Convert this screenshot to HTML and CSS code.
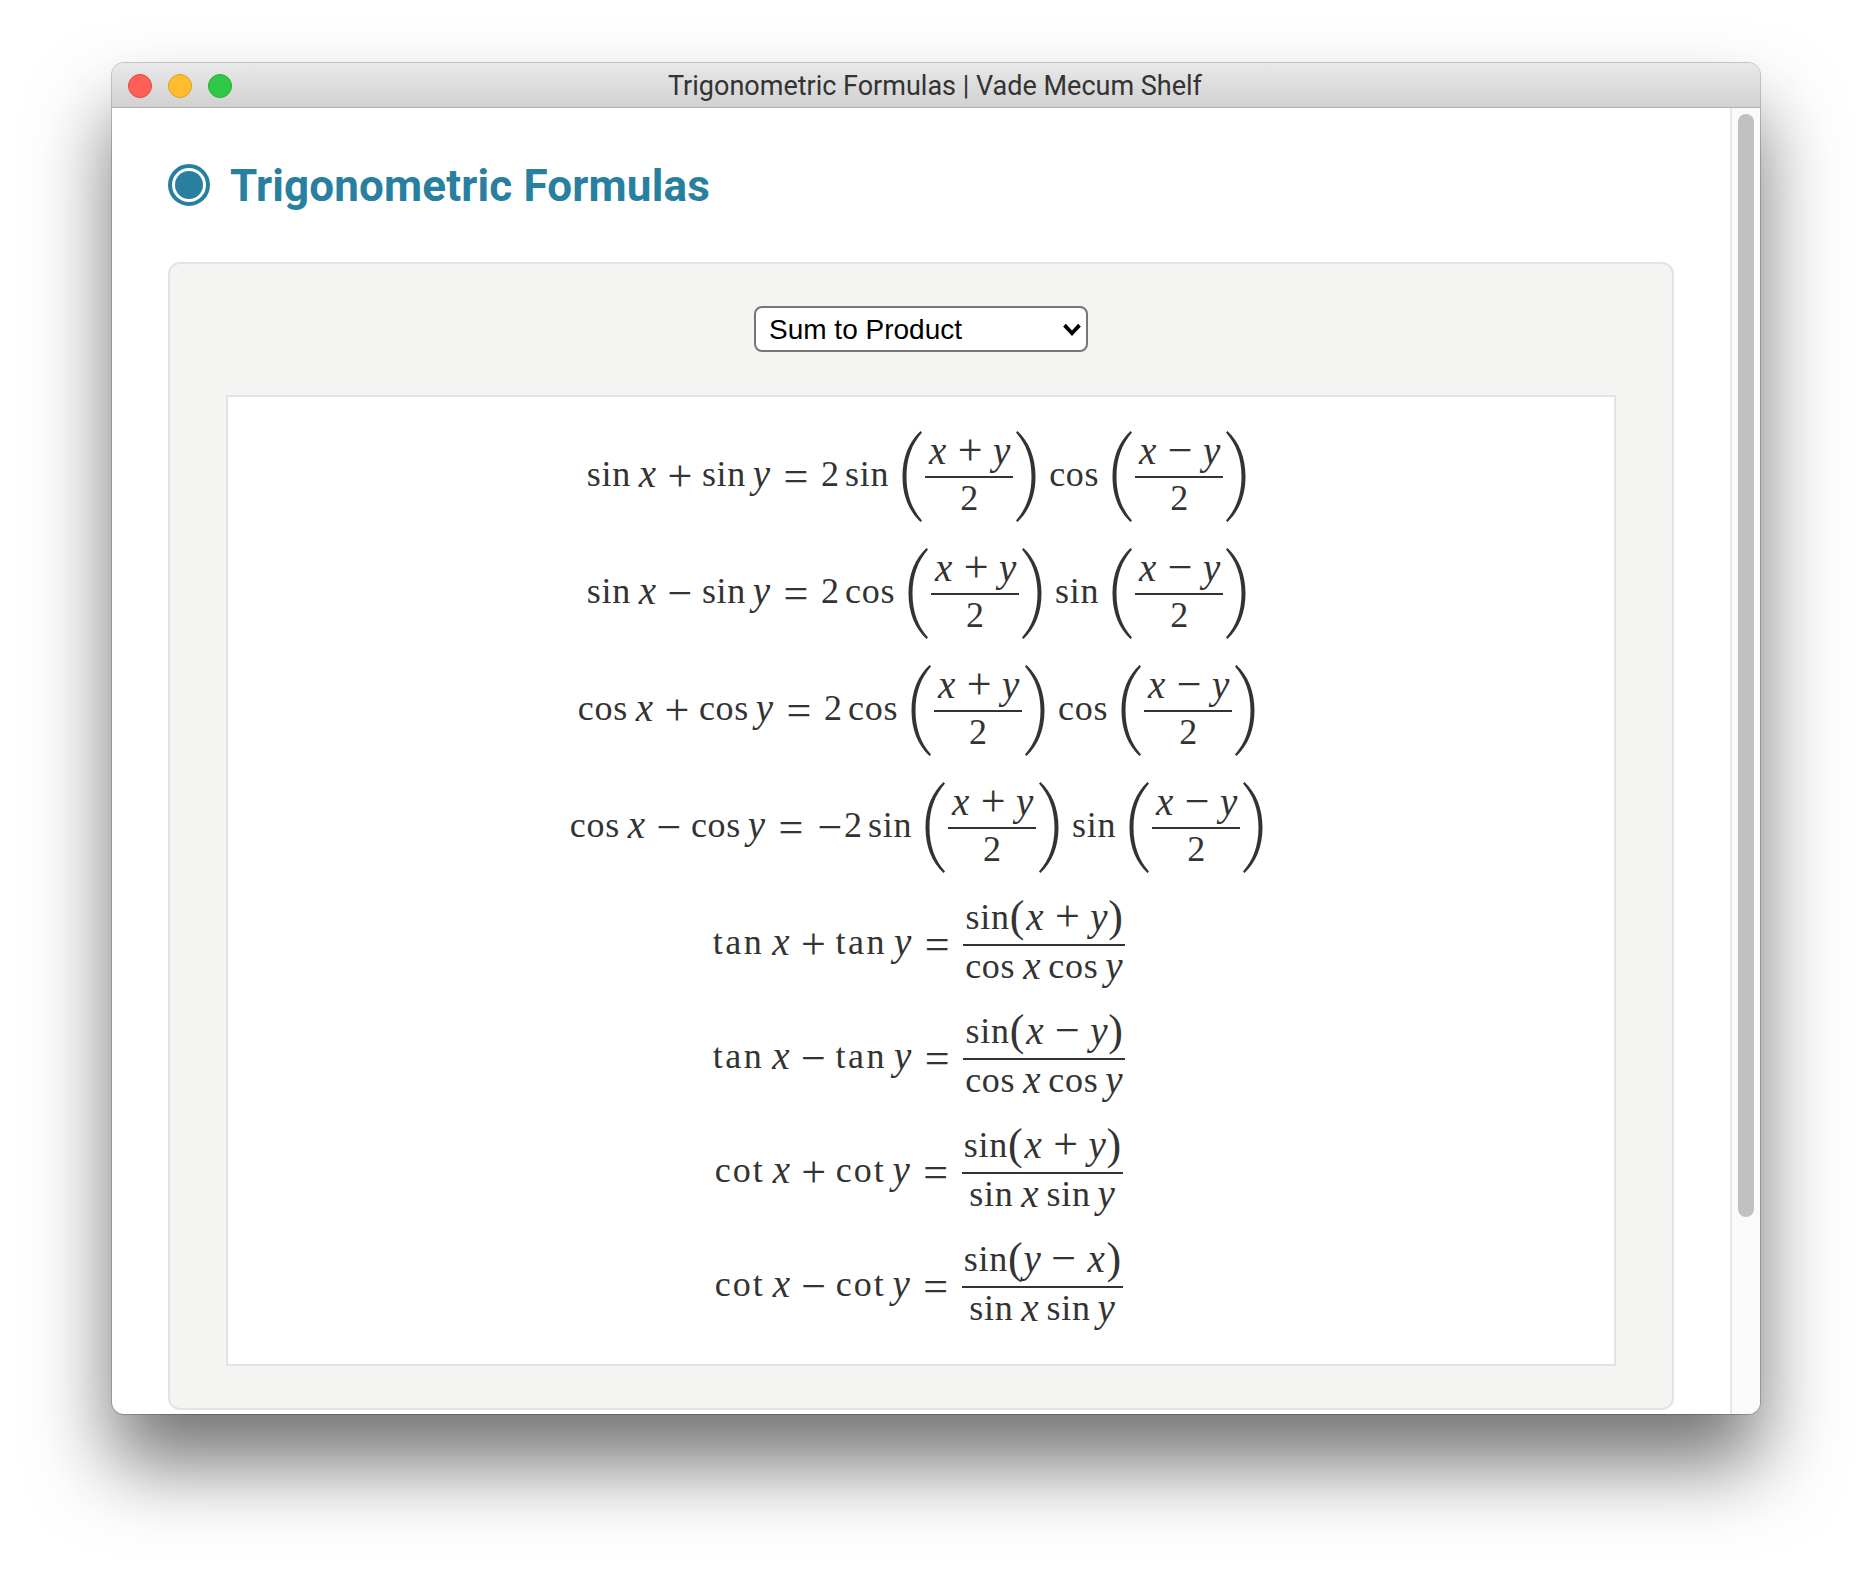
FILE: index.html
```html
<!DOCTYPE html>
<html lang="en">
<head>
    <meta charset="UTF-8">
    <meta name="viewport" content="width=device-width, initial-scale=1.0">
    <title>Trigonometric Formulas | Vade Mecum Shelf</title>
    <link rel="stylesheet" href="styles.css">
</head>
<body>
    <svg class="defs" width="0" height="0" aria-hidden="true">
        <symbol id="lp" viewBox="0 0 22 91"><path d="M19.5 0 C8 11 1.5 26 1.5 45.5 C1.5 65 8 80 19.5 91 L21 89.5 C11 78 5.5 64 5.5 45.5 C5.5 27 11 13 21 1.5 Z"/></symbol>
        <symbol id="rp" viewBox="0 0 22 91"><path d="M2.5 0 C14 11 20.5 26 20.5 45.5 C20.5 65 14 80 2.5 91 L1 89.5 C11 78 16.5 64 16.5 45.5 C16.5 27 11 13 1 1.5 Z"/></symbol>
    </svg>
    <div class="window">
        <header class="titlebar">
            <div class="lights">
                <span class="light red"></span>
                <span class="light yellow"></span>
                <span class="light green"></span>
            </div>
            <div class="wintitle">Trigonometric Formulas | Vade Mecum Shelf</div>
        </header>
        <div class="winbody">
            <main class="content">
                <h1 class="heading"><span class="bullet"><span class="dot"></span></span>Trigonometric Formulas</h1>
                <section class="panel">
                    <div class="selectwrap">
                        <select class="picker" name="group">
                            <option>Sum to Product</option>
                        </select>
                        <svg class="chevron" viewBox="0 0 16 12" width="20" height="15"><path d="M2 2.5 L8 9 L14 2.5" fill="none" stroke="#000" stroke-width="3"/></svg>
                    </div>
                    <div class="formulas">
                        <div class="row tall">
                            <span class="fn">sin</span><span class="thin"></span><span class="mi x">x</span><span class="op">+</span><span class="fn">sin</span><span class="thin"></span><span class="mi y">y</span><span class="rel">=</span><span class="num2">2</span><span class="thin"></span><span class="fn">sin</span>
                            <svg class="paren open"><use href="#lp"/></svg>
                            <span class="frac"><span class="top"><span class="mi x">x</span><span class="op">+</span><span class="mi y">y</span></span><span class="bot"><span class="num2">2</span></span></span>
                            <svg class="paren close"><use href="#rp"/></svg>
                            <span class="fn">cos</span>
                            <svg class="paren open"><use href="#lp"/></svg>
                            <span class="frac"><span class="top"><span class="mi x">x</span><span class="op">−</span><span class="mi y">y</span></span><span class="bot"><span class="num2">2</span></span></span>
                            <svg class="paren last"><use href="#rp"/></svg>
                        </div>
                        <div class="row tall">
                            <span class="fn">sin</span><span class="thin"></span><span class="mi x">x</span><span class="op">−</span><span class="fn">sin</span><span class="thin"></span><span class="mi y">y</span><span class="rel">=</span><span class="num2">2</span><span class="thin"></span><span class="fn">cos</span>
                            <svg class="paren open"><use href="#lp"/></svg>
                            <span class="frac"><span class="top"><span class="mi x">x</span><span class="op">+</span><span class="mi y">y</span></span><span class="bot"><span class="num2">2</span></span></span>
                            <svg class="paren close"><use href="#rp"/></svg>
                            <span class="fn">sin</span>
                            <svg class="paren open"><use href="#lp"/></svg>
                            <span class="frac"><span class="top"><span class="mi x">x</span><span class="op">−</span><span class="mi y">y</span></span><span class="bot"><span class="num2">2</span></span></span>
                            <svg class="paren last"><use href="#rp"/></svg>
                        </div>
                        <div class="row tall">
                            <span class="fn">cos</span><span class="thin"></span><span class="mi x">x</span><span class="op">+</span><span class="fn">cos</span><span class="thin"></span><span class="mi y">y</span><span class="rel">=</span><span class="num2">2</span><span class="thin"></span><span class="fn">cos</span>
                            <svg class="paren open"><use href="#lp"/></svg>
                            <span class="frac"><span class="top"><span class="mi x">x</span><span class="op">+</span><span class="mi y">y</span></span><span class="bot"><span class="num2">2</span></span></span>
                            <svg class="paren close"><use href="#rp"/></svg>
                            <span class="fn">cos</span>
                            <svg class="paren open"><use href="#lp"/></svg>
                            <span class="frac"><span class="top"><span class="mi x">x</span><span class="op">−</span><span class="mi y">y</span></span><span class="bot"><span class="num2">2</span></span></span>
                            <svg class="paren last"><use href="#rp"/></svg>
                        </div>
                        <div class="row tall">
                            <span class="fn">cos</span><span class="thin"></span><span class="mi x">x</span><span class="op">−</span><span class="fn">cos</span><span class="thin"></span><span class="mi y">y</span><span class="rel">=</span><span class="neg">−</span><span class="num2">2</span><span class="thin"></span><span class="fn">sin</span>
                            <svg class="paren open"><use href="#lp"/></svg>
                            <span class="frac"><span class="top"><span class="mi x">x</span><span class="op">+</span><span class="mi y">y</span></span><span class="bot"><span class="num2">2</span></span></span>
                            <svg class="paren close"><use href="#rp"/></svg>
                            <span class="fn">sin</span>
                            <svg class="paren open"><use href="#lp"/></svg>
                            <span class="frac"><span class="top"><span class="mi x">x</span><span class="op">−</span><span class="mi y">y</span></span><span class="bot"><span class="num2">2</span></span></span>
                            <svg class="paren last"><use href="#rp"/></svg>
                        </div>
                        <div class="row short first">
                            <span class="fn wide">tan</span><span class="thin"></span><span class="mi x">x</span><span class="op">+</span><span class="fn wide">tan</span><span class="thin"></span><span class="mi y">y</span><span class="rel">=</span>
                            <span class="frac big"><span class="top"><span class="fn">sin</span><span class="brk">(</span><span class="mi x">x</span><span class="op">+</span><span class="mi y">y</span><span class="brk">)</span></span><span class="bot"><span class="fn">cos</span><span class="thin"></span><span class="mi x">x</span><span class="thin"></span><span class="fn">cos</span><span class="thin"></span><span class="mi y">y</span></span></span>
                        </div>
                        <div class="row short">
                            <span class="fn wide">tan</span><span class="thin"></span><span class="mi x">x</span><span class="op">−</span><span class="fn wide">tan</span><span class="thin"></span><span class="mi y">y</span><span class="rel">=</span>
                            <span class="frac big"><span class="top"><span class="fn">sin</span><span class="brk">(</span><span class="mi x">x</span><span class="op">−</span><span class="mi y">y</span><span class="brk">)</span></span><span class="bot"><span class="fn">cos</span><span class="thin"></span><span class="mi x">x</span><span class="thin"></span><span class="fn">cos</span><span class="thin"></span><span class="mi y">y</span></span></span>
                        </div>
                        <div class="row short">
                            <span class="fn mid">cot</span><span class="thin"></span><span class="mi x">x</span><span class="op">+</span><span class="fn mid">cot</span><span class="thin"></span><span class="mi y">y</span><span class="rel">=</span>
                            <span class="frac big"><span class="top"><span class="fn">sin</span><span class="brk">(</span><span class="mi x">x</span><span class="op">+</span><span class="mi y">y</span><span class="brk">)</span></span><span class="bot"><span class="fn">sin</span><span class="thin"></span><span class="mi x">x</span><span class="thin"></span><span class="fn">sin</span><span class="thin"></span><span class="mi y">y</span></span></span>
                        </div>
                        <div class="row short">
                            <span class="fn mid">cot</span><span class="thin"></span><span class="mi x">x</span><span class="op">−</span><span class="fn mid">cot</span><span class="thin"></span><span class="mi y">y</span><span class="rel">=</span>
                            <span class="frac big"><span class="top"><span class="fn">sin</span><span class="brk">(</span><span class="mi y">y</span><span class="op">−</span><span class="mi x">x</span><span class="brk">)</span></span><span class="bot"><span class="fn">sin</span><span class="thin"></span><span class="mi x">x</span><span class="thin"></span><span class="fn">sin</span><span class="thin"></span><span class="mi y">y</span></span></span>
                        </div>
                    </div>
                </section>
            </main>
            <div class="scrollbar"><div class="thumb"></div></div>
        </div>
    </div>
</body>
</html>
```

FILE: styles.css
```css
html, body {
    height: 100%;
}
body {
    margin: 0;
    padding: 63px 112px 0;
    box-sizing: border-box;
    background-color: #fff;
    overflow: hidden;
}
.defs {
    position: absolute;
}
.window {
    height: 1351px;
    display: flex;
    flex-direction: column;
    background-color: #fff;
    border-radius: 12px;
    overflow: hidden;
    box-shadow: 0 50px 80px rgba(0,0,0,0.55), 0 0 0 1px rgba(0,0,0,0.2);
}
.titlebar {
    height: 45px;
    flex: none;
    box-sizing: border-box;
    display: flex;
    align-items: center;
    position: relative;
    background: linear-gradient(#e9e9e9, #d1d1d1);
    border-bottom: 1px solid #b1b1b1;
}
.lights {
    display: flex;
    gap: 16px;
    padding: 1px 0 0 16px;
}
.light {
    width: 24px;
    height: 24px;
    box-sizing: border-box;
    border-radius: 50%;
    border: 1px solid;
}
.red {
    background-color: #ff5f57;
    border-color: #e2463f;
}
.yellow {
    background-color: #ffbd2e;
    border-color: #e1a116;
}
.green {
    background-color: #2fc94a;
    border-color: #2aad2c;
}
.wintitle {
    position: absolute;
    left: 0;
    right: 2px;
    padding-top: 2px;
    text-align: center;
    font-family: Roboto, sans-serif;
    font-size: 27px;
    color: #333;
}
.winbody {
    flex: 1;
    display: flex;
    min-height: 0;
}
.content {
    flex: 1;
    padding: 0 56px;
    min-width: 0;
}
.heading {
    margin: 56px 0 0;
    height: 98px;
    display: flex;
    align-items: flex-start;
    gap: 20px;
    font-family: Roboto, sans-serif;
    font-weight: 700;
    font-size: 44px;
    letter-spacing: 0.15px;
    line-height: 44px;
    color: #287fa0;
}
.bullet {
    width: 42px;
    height: 42px;
    flex: none;
    box-sizing: border-box;
    border: 4px solid #287fa0;
    border-radius: 50%;
    display: flex;
    align-items: center;
    justify-content: center;
}
.dot {
    width: 28px;
    height: 28px;
    border-radius: 50%;
    background-color: #287fa0;
}
.panel {
    box-sizing: border-box;
    height: 1148px;
    padding: 42px 56px 0;
    background-color: #f4f4f2;
    border: 2px solid #e3e3e1;
    border-radius: 12px;
}
.selectwrap {
    width: 334px;
    margin: 0 auto;
    position: relative;
}
.picker {
    display: block;
    width: 100%;
    height: 46px;
    padding: 0 13px;
    appearance: none;
    background-color: #fff;
    border: 2px solid #767676;
    border-radius: 8px;
    font-family: "Liberation Sans", Arial, sans-serif;
    font-size: 28px;
    color: #000;
}
.chevron {
    position: absolute;
    right: 6px;
    top: 16px;
    pointer-events: none;
}
.formulas {
    box-sizing: border-box;
    height: 971px;
    margin-top: 43px;
    padding: 21px 8px 0 0;
    background-color: #fff;
    border: 2px solid #e3e3e1;
    font-family: "Liberation Serif", "Times New Roman", serif;
    font-size: 36px;
    line-height: 36px;
    color: #333;
}
.row {
    display: flex;
    align-items: center;
    justify-content: center;
}
.tall {
    height: 117px;
}
.short {
    height: 114px;
    margin-left: 5px;
}
.first {
    margin-top: 2px;
}
/* lift the text a little so the baseline sits below the fraction bar */
.row > .fn, .row > .mi, .row > .num2 {
    margin-bottom: 6px;
}
.fn {
    letter-spacing: 0.7px;
}
.fn.wide {
    letter-spacing: 2.6px;
}
.fn.mid {
    letter-spacing: 2px;
}
.thin {
    width: 6px;
    flex: none;
}
.mi {
    font-size: 39px;
    font-style: italic;
    text-align: center;
    flex: none;
}
.mi.x {
    width: 21px;
}
.mi.y {
    width: 19px;
}
.op, .rel, .neg {
    font-size: 44px;
    text-align: center;
    flex: none;
}
.op {
    width: 28px;
    margin: 0 8px;
}
.rel {
    width: 28px;
    margin: 0 11px;
}
.neg {
    width: 28px;
}
.num2 {
    flex: none;
}
.paren {
    width: 22px;
    height: 91px;
    flex: none;
    fill: #333;
}
.paren.open {
    margin: 0 1px 0 12px;
}
.paren.close {
    margin: 0 12px 0 1px;
}
.paren.last {
    margin-left: 1px;
}
.frac {
    display: flex;
    flex-direction: column;
    flex: none;
    padding: 0 1px;
}
.top, .bot {
    display: flex;
    justify-content: center;
    padding: 0 2px;
    box-sizing: border-box;
}
.top {
    height: 46px;
    align-items: flex-end;
    padding-bottom: 7px;
    border-bottom: 2px solid #333;
}
.bot {
    height: 44px;
    align-items: flex-start;
    padding-top: 2px;
}
.big .top {
    padding-bottom: 9px;
}
.brk {
    font-size: 44px;
    line-height: 36px;
    flex: none;
}
.scrollbar {
    width: 30px;
    flex: none;
    box-sizing: border-box;
    padding: 6px 6px 0;
    background-color: #fafafa;
    border-left: 2px solid #e8e8e8;
}
.thumb {
    height: 1103px;
    border-radius: 8px;
    background-color: #c1c1c1;
}
```
